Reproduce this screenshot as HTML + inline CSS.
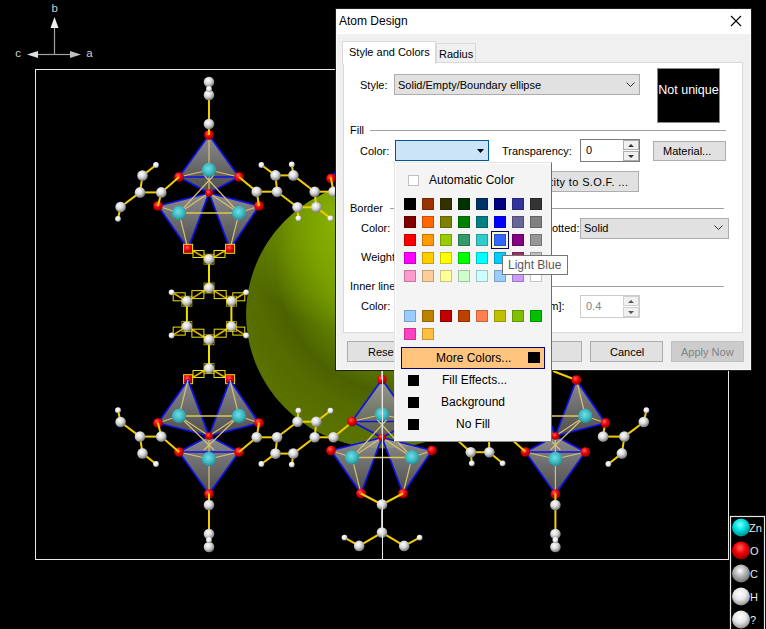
<!DOCTYPE html>
<html><head><meta charset="utf-8">
<style>
*{box-sizing:border-box;margin:0;padding:0}
html,body{width:766px;height:629px;overflow:hidden;background:#000}
body{position:relative;font-family:"Liberation Sans",sans-serif}
.a{position:absolute}
.t{position:absolute;white-space:nowrap;font-size:11px;color:#000;line-height:12px}
.btn{position:absolute;background:#e1e1e1;border:1px solid #adadad}
.sw{position:absolute;width:12px;height:12px;border:1px solid rgba(0,0,0,.22)}
</style></head><body>
<svg class="a" style="left:0;top:0" width="766" height="629" viewBox="0 0 766 629">
<defs>
<radialGradient id="gC" cx="0.4" cy="0.35" r="0.65"><stop offset="0" stop-color="#ffffff"/><stop offset="0.5" stop-color="#d8d8d8"/><stop offset="1" stop-color="#7a7a7a"/></radialGradient>
<radialGradient id="gH" cx="0.4" cy="0.35" r="0.65"><stop offset="0" stop-color="#ffffff"/><stop offset="0.6" stop-color="#e8e8e8"/><stop offset="1" stop-color="#909090"/></radialGradient>
<radialGradient id="gO" cx="0.4" cy="0.35" r="0.65"><stop offset="0" stop-color="#ff6060"/><stop offset="0.5" stop-color="#f00000"/><stop offset="1" stop-color="#900000"/></radialGradient>
<radialGradient id="gZn" cx="0.45" cy="0.4" r="0.6"><stop offset="0" stop-color="#70e0e8"/><stop offset="0.6" stop-color="#3cb8c0"/><stop offset="1" stop-color="#2a8890"/></radialGradient>
<radialGradient id="gEl1" gradientUnits="userSpaceOnUse" cx="405" cy="264" r="180"><stop offset="0" stop-color="#7a9e00"/><stop offset="0.44" stop-color="#6e9200"/><stop offset="0.56" stop-color="#5e7c00"/><stop offset="0.72" stop-color="#4c6200"/><stop offset="0.83" stop-color="#536b00"/><stop offset="1" stop-color="#5a7200"/></radialGradient>
<radialGradient id="gEl2" gradientUnits="userSpaceOnUse" cx="345" cy="218" r="110"><stop offset="0" stop-color="#8cb600" stop-opacity="0.95"/><stop offset="0.5" stop-color="#88b200" stop-opacity="0.55"/><stop offset="1" stop-color="#88b200" stop-opacity="0"/></radialGradient>
<radialGradient id="gLZn" cx="0.45" cy="0.35" r="0.65"><stop offset="0" stop-color="#80ffff"/><stop offset="0.5" stop-color="#00e0e0"/><stop offset="1" stop-color="#008888"/></radialGradient>
<radialGradient id="gLO" cx="0.45" cy="0.35" r="0.65"><stop offset="0" stop-color="#ff6060"/><stop offset="0.5" stop-color="#f00000"/><stop offset="1" stop-color="#900000"/></radialGradient>
<radialGradient id="gLC" cx="0.45" cy="0.35" r="0.65"><stop offset="0" stop-color="#ffffff"/><stop offset="0.4" stop-color="#c0c0c0"/><stop offset="1" stop-color="#707070"/></radialGradient>
<radialGradient id="gLH" cx="0.45" cy="0.35" r="0.65"><stop offset="0" stop-color="#ffffff"/><stop offset="0.5" stop-color="#e8e8e8"/><stop offset="1" stop-color="#909090"/></radialGradient>
<linearGradient id="gPoly" x1="0" y1="0" x2="0" y2="1"><stop offset="0" stop-color="#a4a4a4" stop-opacity="0.85"/><stop offset="1" stop-color="#5a5a5a" stop-opacity="0.85"/></linearGradient>
</defs>
<!-- axes -->
<g stroke="#a0a0a0" stroke-width="1.2" fill="none"><line x1="54.5" y1="54.5" x2="54.5" y2="27"/><line x1="38" y1="54.5" x2="70" y2="54.5"/></g>
<polygon points="54.5,17 50.5,28 58.5,28" fill="#f0f0f0"/>
<polygon points="27,54.5 38,51 38,58" fill="#e0e0e0"/>
<polygon points="81,54.5 70,51 70,58" fill="#c0c0c0"/>
<text x="51.5" y="12" font-family="Liberation Sans" font-size="11.5" fill="#d0d0d0">b</text>
<text x="15.2" y="57.2" font-family="Liberation Sans" font-size="11.5" fill="#d0d0d0">c</text>
<text x="86.3" y="57.2" font-family="Liberation Sans" font-size="11.5" fill="#d0d0d0">a</text>
<!-- frame -->
<rect x="35.5" y="69.5" width="693" height="490" fill="none" stroke="#e8e8e8" stroke-width="1"/>
<!-- ellipsoid -->
<polygon points="246.2,318.3 246.4,323.0 246.8,327.6 247.3,332.3 248.1,336.9 248.9,341.5 250.0,346.1 251.2,350.6 252.6,355.1 254.1,359.5 255.8,363.9 257.7,368.2 259.7,372.5 261.9,376.7 264.2,380.8 266.6,384.8 269.2,388.8 272.0,392.6 274.8,396.4 277.8,400.0 281.0,403.6 284.2,407.0 287.6,410.3 291.1,413.5 294.7,416.6 298.5,419.6 302.3,422.4 306.2,425.1 310.2,427.7 314.3,430.1 318.5,432.4 322.8,434.5 327.2,436.5 331.6,438.4 336.1,440.1 340.6,441.6 345.2,443.0 349.8,444.3 354.5,445.3 359.2,446.2 364.0,447.0 368.8,447.6 373.5,448.0 378.4,448.3 383.2,448.4 388.0,448.3 392.8,448.1 397.6,447.7 402.4,447.1 407.1,446.4 411.8,445.6 416.5,444.5 421.2,443.3 425.8,442.0 430.4,440.5 434.9,438.8 439.3,437.0 443.7,435.0 448.0,432.9 452.2,430.7 456.3,428.3 460.4,425.7 464.3,423.1 468.2,420.3 472.0,417.3 475.6,414.3 479.1,411.1 482.6,407.8 485.9,404.4 489.0,400.9 492.1,397.2 495.0,393.5 497.8,389.7 500.4,385.8 502.9,381.7 505.3,377.7 507.5,373.5 509.6,369.3 511.5,365.0 513.2,360.6 514.8,356.2 516.2,351.7 517.5,347.2 518.6,342.6 519.6,338.0 520.4,333.4 521.0,328.7 521.4,324.1 521.7,319.4 521.8,314.7 521.7,310.0 521.5,305.4 521.1,300.7 520.6,296.0 519.8,291.4 519.0,286.8 517.9,282.2 516.7,277.7 515.3,273.2 513.8,268.8 512.1,264.4 510.2,260.1 508.2,255.8 506.0,251.7 503.7,247.5 501.3,243.5 498.7,239.6 495.9,235.7 493.1,232.0 490.1,228.3 486.9,224.8 483.7,221.3 480.3,218.0 476.8,214.8 473.2,211.7 469.4,208.8 465.6,205.9 461.7,203.2 457.7,200.6 453.6,198.2 449.4,195.9 445.1,193.8 440.7,191.8 436.3,189.9 431.8,188.2 427.3,186.7 422.7,185.3 418.1,184.1 413.4,183.0 408.7,182.1 403.9,181.3 399.1,180.8 394.4,180.3 389.6,180.1 384.7,180.0 379.9,180.0 375.1,180.3 370.3,180.6 365.6,181.2 360.8,181.9 356.1,182.8 351.4,183.8 346.7,185.0 342.1,186.4 337.5,187.9 333.0,189.5 328.6,191.3 324.2,193.3 319.9,195.4 315.7,197.7 311.6,200.1 307.5,202.6 303.6,205.3 299.7,208.1 295.9,211.0 292.3,214.1 288.8,217.2 285.3,220.5 282.0,224.0 278.9,227.5 275.8,231.1 272.9,234.8 270.1,238.7 267.5,242.6 265.0,246.6 262.6,250.7 260.4,254.8 258.3,259.1 256.4,263.4 254.7,267.7 253.1,272.2 251.7,276.6 250.4,281.2 249.3,285.7 248.3,290.3 247.6,294.9 246.9,299.6 246.5,304.3 246.2,308.9 246.1,313.6" fill="url(#gEl1)"/><polygon points="246.2,318.3 246.4,323.0 246.8,327.6 247.3,332.3 248.1,336.9 248.9,341.5 250.0,346.1 251.2,350.6 252.6,355.1 254.1,359.5 255.8,363.9 257.7,368.2 259.7,372.5 261.9,376.7 264.2,380.8 266.6,384.8 269.2,388.8 272.0,392.6 274.8,396.4 277.8,400.0 281.0,403.6 284.2,407.0 287.6,410.3 291.1,413.5 294.7,416.6 298.5,419.6 302.3,422.4 306.2,425.1 310.2,427.7 314.3,430.1 318.5,432.4 322.8,434.5 327.2,436.5 331.6,438.4 336.1,440.1 340.6,441.6 345.2,443.0 349.8,444.3 354.5,445.3 359.2,446.2 364.0,447.0 368.8,447.6 373.5,448.0 378.4,448.3 383.2,448.4 388.0,448.3 392.8,448.1 397.6,447.7 402.4,447.1 407.1,446.4 411.8,445.6 416.5,444.5 421.2,443.3 425.8,442.0 430.4,440.5 434.9,438.8 439.3,437.0 443.7,435.0 448.0,432.9 452.2,430.7 456.3,428.3 460.4,425.7 464.3,423.1 468.2,420.3 472.0,417.3 475.6,414.3 479.1,411.1 482.6,407.8 485.9,404.4 489.0,400.9 492.1,397.2 495.0,393.5 497.8,389.7 500.4,385.8 502.9,381.7 505.3,377.7 507.5,373.5 509.6,369.3 511.5,365.0 513.2,360.6 514.8,356.2 516.2,351.7 517.5,347.2 518.6,342.6 519.6,338.0 520.4,333.4 521.0,328.7 521.4,324.1 521.7,319.4 521.8,314.7 521.7,310.0 521.5,305.4 521.1,300.7 520.6,296.0 519.8,291.4 519.0,286.8 517.9,282.2 516.7,277.7 515.3,273.2 513.8,268.8 512.1,264.4 510.2,260.1 508.2,255.8 506.0,251.7 503.7,247.5 501.3,243.5 498.7,239.6 495.9,235.7 493.1,232.0 490.1,228.3 486.9,224.8 483.7,221.3 480.3,218.0 476.8,214.8 473.2,211.7 469.4,208.8 465.6,205.9 461.7,203.2 457.7,200.6 453.6,198.2 449.4,195.9 445.1,193.8 440.7,191.8 436.3,189.9 431.8,188.2 427.3,186.7 422.7,185.3 418.1,184.1 413.4,183.0 408.7,182.1 403.9,181.3 399.1,180.8 394.4,180.3 389.6,180.1 384.7,180.0 379.9,180.0 375.1,180.3 370.3,180.6 365.6,181.2 360.8,181.9 356.1,182.8 351.4,183.8 346.7,185.0 342.1,186.4 337.5,187.9 333.0,189.5 328.6,191.3 324.2,193.3 319.9,195.4 315.7,197.7 311.6,200.1 307.5,202.6 303.6,205.3 299.7,208.1 295.9,211.0 292.3,214.1 288.8,217.2 285.3,220.5 282.0,224.0 278.9,227.5 275.8,231.1 272.9,234.8 270.1,238.7 267.5,242.6 265.0,246.6 262.6,250.7 260.4,254.8 258.3,259.1 256.4,263.4 254.7,267.7 253.1,272.2 251.7,276.6 250.4,281.2 249.3,285.7 248.3,290.3 247.6,294.9 246.9,299.6 246.5,304.3 246.2,308.9 246.1,313.6" fill="url(#gEl2)"/>
<g>
<polygon points="331.0,178.5 382.0,191.5 361.0,135.5" fill="url(#gPoly)" stroke="#1010e8" stroke-width="1.7" stroke-linejoin="round"/>
<polygon points="432.0,178.5 382.0,191.5 403.0,135.5" fill="url(#gPoly)" stroke="#1010e8" stroke-width="1.7" stroke-linejoin="round"/>
<polygon points="382.0,249.5 352.0,207.5 382.0,191.5 412.0,207.5" fill="url(#gPoly)" stroke="#1010e8" stroke-width="1.7" stroke-linejoin="round"/>
<line x1="352.0" y1="207.5" x2="412.0" y2="207.5" stroke="#1010e8" stroke-width="1.7"/>
<line x1="382.0" y1="214.5" x2="382.0" y2="249.5" stroke="#d8c070" stroke-width="1.2"/>
<line x1="382.0" y1="214.5" x2="352.0" y2="207.5" stroke="#d8c070" stroke-width="1.2"/>
<line x1="382.0" y1="214.5" x2="412.0" y2="207.5" stroke="#d8c070" stroke-width="1.2"/>
<line x1="382.0" y1="214.5" x2="382.0" y2="191.5" stroke="#d8c070" stroke-width="1.2"/>
<line x1="352.0" y1="171.5" x2="382.0" y2="191.5" stroke="#d8c070" stroke-width="1.2"/>
<line x1="352.0" y1="171.5" x2="331.0" y2="178.5" stroke="#d8c070" stroke-width="1.2"/>
<line x1="352.0" y1="171.5" x2="361.0" y2="135.5" stroke="#d8c070" stroke-width="1.2"/>
<line x1="352.0" y1="171.5" x2="387.0" y2="205.5" stroke="#d8c070" stroke-width="1.2"/>
<line x1="412.0" y1="171.5" x2="382.0" y2="191.5" stroke="#d8c070" stroke-width="1.2"/>
<line x1="412.0" y1="171.5" x2="432.0" y2="178.5" stroke="#d8c070" stroke-width="1.2"/>
<line x1="412.0" y1="171.5" x2="403.0" y2="135.5" stroke="#d8c070" stroke-width="1.2"/>
<line x1="412.0" y1="171.5" x2="377.0" y2="205.5" stroke="#d8c070" stroke-width="1.2"/>
<line x1="352.0" y1="171.5" x2="412.0" y2="171.5" stroke="#e0c850" stroke-width="1.5"/>
<circle cx="382.0" cy="214.5" r="7.2" fill="url(#gZn)"/>
<circle cx="352.0" cy="171.5" r="7.2" fill="url(#gZn)"/>
<circle cx="412.0" cy="171.5" r="7.2" fill="url(#gZn)"/>
<circle cx="382.0" cy="249.5" r="4.8" fill="url(#gO)"/>
<circle cx="352.0" cy="207.5" r="4.8" fill="url(#gO)"/>
<circle cx="412.0" cy="207.5" r="4.8" fill="url(#gO)"/>
<circle cx="331.0" cy="178.5" r="4.8" fill="url(#gO)"/>
<circle cx="432.0" cy="178.5" r="4.8" fill="url(#gO)"/>
<circle cx="382.0" cy="191.5" r="3.8" fill="url(#gO)"/>
<polygon points="158.0,206.0 209.0,193.0 188.0,249.0" fill="url(#gPoly)" stroke="#1010e8" stroke-width="1.7" stroke-linejoin="round"/>
<polygon points="259.0,206.0 209.0,193.0 230.0,249.0" fill="url(#gPoly)" stroke="#1010e8" stroke-width="1.7" stroke-linejoin="round"/>
<polygon points="209.0,135.0 179.0,177.0 209.0,193.0 239.0,177.0" fill="url(#gPoly)" stroke="#1010e8" stroke-width="1.7" stroke-linejoin="round"/>
<line x1="179.0" y1="177.0" x2="239.0" y2="177.0" stroke="#1010e8" stroke-width="1.7"/>
<line x1="209.0" y1="170.0" x2="209.0" y2="135.0" stroke="#d8c070" stroke-width="1.2"/>
<line x1="209.0" y1="170.0" x2="179.0" y2="177.0" stroke="#d8c070" stroke-width="1.2"/>
<line x1="209.0" y1="170.0" x2="239.0" y2="177.0" stroke="#d8c070" stroke-width="1.2"/>
<line x1="209.0" y1="170.0" x2="209.0" y2="193.0" stroke="#d8c070" stroke-width="1.2"/>
<line x1="179.0" y1="213.0" x2="209.0" y2="193.0" stroke="#d8c070" stroke-width="1.2"/>
<line x1="179.0" y1="213.0" x2="158.0" y2="206.0" stroke="#d8c070" stroke-width="1.2"/>
<line x1="179.0" y1="213.0" x2="188.0" y2="249.0" stroke="#d8c070" stroke-width="1.2"/>
<line x1="179.0" y1="213.0" x2="214.0" y2="175.0" stroke="#d8c070" stroke-width="1.2"/>
<line x1="239.0" y1="213.0" x2="209.0" y2="193.0" stroke="#d8c070" stroke-width="1.2"/>
<line x1="239.0" y1="213.0" x2="259.0" y2="206.0" stroke="#d8c070" stroke-width="1.2"/>
<line x1="239.0" y1="213.0" x2="230.0" y2="249.0" stroke="#d8c070" stroke-width="1.2"/>
<line x1="239.0" y1="213.0" x2="204.0" y2="175.0" stroke="#d8c070" stroke-width="1.2"/>
<line x1="179.0" y1="213.0" x2="239.0" y2="213.0" stroke="#e0c850" stroke-width="1.5"/>
<circle cx="209.0" cy="170.0" r="7.2" fill="url(#gZn)"/>
<circle cx="179.0" cy="213.0" r="7.2" fill="url(#gZn)"/>
<circle cx="239.0" cy="213.0" r="7.2" fill="url(#gZn)"/>
<circle cx="209.0" cy="135.0" r="4.8" fill="url(#gO)"/>
<circle cx="179.0" cy="177.0" r="4.8" fill="url(#gO)"/>
<circle cx="239.0" cy="177.0" r="4.8" fill="url(#gO)"/>
<circle cx="158.0" cy="206.0" r="4.8" fill="url(#gO)"/>
<circle cx="259.0" cy="206.0" r="4.8" fill="url(#gO)"/>
<circle cx="209.0" cy="193.0" r="3.8" fill="url(#gO)"/>
<line x1="158.0" y1="206.0" x2="161.3" y2="192.4" stroke="#f0cc00" stroke-width="2"/>
<line x1="259.0" y1="206.0" x2="256.7" y2="191.7" stroke="#f0cc00" stroke-width="2"/>
<line x1="179.0" y1="177.0" x2="161.3" y2="192.4" stroke="#f0cc00" stroke-width="2"/>
<line x1="239.0" y1="177.0" x2="256.7" y2="191.7" stroke="#f0cc00" stroke-width="2"/>
<line x1="333.5" y1="191.7" x2="330.8" y2="177.5" stroke="#f0cc00" stroke-width="2"/>
<line x1="209.0" y1="135.0" x2="209.0" y2="82.0" stroke="#f0cc00" stroke-width="2"/>
<line x1="156.0" y1="165.0" x2="142.5" y2="175.6" stroke="#f0cc00" stroke-width="2"/>
<line x1="142.5" y1="175.6" x2="140.0" y2="192.4" stroke="#f0cc00" stroke-width="2"/>
<line x1="140.0" y1="192.4" x2="161.3" y2="192.4" stroke="#f0cc00" stroke-width="2"/>
<line x1="140.0" y1="192.4" x2="120.6" y2="207.0" stroke="#f0cc00" stroke-width="2"/>
<line x1="120.6" y1="207.0" x2="118.0" y2="218.8" stroke="#f0cc00" stroke-width="2"/>
<circle cx="156.0" cy="165.0" r="2.9" fill="url(#gH)"/>
<circle cx="142.5" cy="175.6" r="5.3" fill="url(#gC)"/>
<circle cx="140.0" cy="192.4" r="5.3" fill="url(#gC)"/>
<circle cx="161.3" cy="192.4" r="5.3" fill="url(#gC)"/>
<circle cx="120.6" cy="207.0" r="5.3" fill="url(#gC)"/>
<circle cx="118.0" cy="218.8" r="2.9" fill="url(#gH)"/>
<line x1="256.7" y1="191.7" x2="277.1" y2="191.7" stroke="#f0cc00" stroke-width="2"/>
<line x1="277.1" y1="191.7" x2="275.5" y2="175.4" stroke="#f0cc00" stroke-width="2"/>
<line x1="275.5" y1="175.4" x2="293.4" y2="175.4" stroke="#f0cc00" stroke-width="2"/>
<line x1="293.4" y1="175.4" x2="314.7" y2="191.7" stroke="#f0cc00" stroke-width="2"/>
<line x1="314.7" y1="191.7" x2="316.3" y2="207.3" stroke="#f0cc00" stroke-width="2"/>
<line x1="297.5" y1="207.3" x2="277.1" y2="191.7" stroke="#f0cc00" stroke-width="2"/>
<line x1="314.7" y1="191.7" x2="333.5" y2="191.7" stroke="#f0cc00" stroke-width="2"/>
<line x1="275.5" y1="175.4" x2="261.4" y2="165.0" stroke="#f0cc00" stroke-width="2"/>
<line x1="293.4" y1="175.4" x2="291.8" y2="164.4" stroke="#f0cc00" stroke-width="2"/>
<line x1="297.5" y1="207.3" x2="298.4" y2="218.3" stroke="#f0cc00" stroke-width="2"/>
<line x1="316.3" y1="207.3" x2="330.4" y2="218.3" stroke="#f0cc00" stroke-width="2"/>
<line x1="297.5" y1="207.3" x2="316.3" y2="207.3" stroke="#f0cc00" stroke-width="2"/>
<circle cx="256.7" cy="191.7" r="5.3" fill="url(#gC)"/>
<circle cx="275.5" cy="175.4" r="5.3" fill="url(#gC)"/>
<circle cx="277.1" cy="191.7" r="5.3" fill="url(#gC)"/>
<circle cx="293.4" cy="175.4" r="5.3" fill="url(#gC)"/>
<circle cx="297.5" cy="207.3" r="5.3" fill="url(#gC)"/>
<circle cx="314.7" cy="191.7" r="5.3" fill="url(#gC)"/>
<circle cx="316.3" cy="207.3" r="5.3" fill="url(#gC)"/>
<circle cx="333.5" cy="191.7" r="5.3" fill="url(#gC)"/>
<circle cx="261.4" cy="165.0" r="2.9" fill="url(#gH)"/>
<circle cx="291.8" cy="164.4" r="2.9" fill="url(#gH)"/>
<circle cx="298.4" cy="218.3" r="2.9" fill="url(#gH)"/>
<circle cx="330.4" cy="218.3" r="2.9" fill="url(#gH)"/>
<circle cx="209.0" cy="124.0" r="5.3" fill="url(#gC)"/>
<circle cx="209.0" cy="95.0" r="5.3" fill="url(#gC)"/>
<circle cx="209.0" cy="82.0" r="5.3" fill="url(#gC)"/>
<circle cx="209.0" cy="89.0" r="2.9" fill="url(#gH)"/>
<line x1="209.0" y1="259.2" x2="209.0" y2="288.0" stroke="#f0e000" stroke-width="2"/>
<line x1="186.9" y1="301.2" x2="186.9" y2="326.6" stroke="#f0e000" stroke-width="2"/>
<line x1="231.4" y1="301.2" x2="231.4" y2="326.6" stroke="#f0e000" stroke-width="2"/>
<line x1="209.0" y1="339.8" x2="209.0" y2="368.6" stroke="#f0e000" stroke-width="2"/>
<line x1="205.9" y1="289.6" x2="189.9" y2="299.6" stroke="#e0b000" stroke-width="1.6"/>
<rect x="191.9" y="290.6" width="12" height="8" fill="none" stroke="#f0e000" stroke-width="1"/>
<line x1="212.2" y1="289.6" x2="228.2" y2="299.6" stroke="#e0b000" stroke-width="1.6"/>
<rect x="214.2" y="290.6" width="12" height="8" fill="none" stroke="#f0e000" stroke-width="1"/>
<line x1="189.9" y1="328.2" x2="205.9" y2="338.2" stroke="#e0b000" stroke-width="1.6"/>
<rect x="191.9" y="329.2" width="12" height="8" fill="none" stroke="#f0e000" stroke-width="1"/>
<line x1="228.2" y1="328.2" x2="212.2" y2="338.2" stroke="#e0b000" stroke-width="1.6"/>
<rect x="214.2" y="329.2" width="12" height="8" fill="none" stroke="#f0e000" stroke-width="1"/>
<line x1="187.2" y1="301.8" x2="171.2" y2="291.8" stroke="#e0b000" stroke-width="1.6"/>
<rect x="173.2" y="292.8" width="12" height="8" fill="none" stroke="#f0e000" stroke-width="1"/>
<line x1="230.8" y1="301.8" x2="246.8" y2="291.8" stroke="#e0b000" stroke-width="1.6"/>
<rect x="232.8" y="292.8" width="12" height="8" fill="none" stroke="#f0e000" stroke-width="1"/>
<line x1="187.2" y1="326.1" x2="171.2" y2="336.1" stroke="#e0b000" stroke-width="1.6"/>
<rect x="173.2" y="327.1" width="12" height="8" fill="none" stroke="#f0e000" stroke-width="1"/>
<line x1="230.8" y1="326.1" x2="246.8" y2="336.1" stroke="#e0b000" stroke-width="1.6"/>
<rect x="232.8" y="327.1" width="12" height="8" fill="none" stroke="#f0e000" stroke-width="1"/>
<line x1="191.0" y1="249.5" x2="206.0" y2="258.5" stroke="#e0b000" stroke-width="1.6"/>
<rect x="193.0" y="250.5" width="11" height="7" fill="none" stroke="#f0e000" stroke-width="1"/>
<line x1="227.0" y1="249.5" x2="212.0" y2="258.5" stroke="#e0b000" stroke-width="1.6"/>
<rect x="214.0" y="250.5" width="11" height="7" fill="none" stroke="#f0e000" stroke-width="1"/>
<line x1="191.0" y1="378.5" x2="206.0" y2="369.5" stroke="#e0b000" stroke-width="1.6"/>
<rect x="193.0" y="370.5" width="11" height="7" fill="none" stroke="#f0e000" stroke-width="1"/>
<line x1="227.0" y1="378.5" x2="212.0" y2="369.5" stroke="#e0b000" stroke-width="1.6"/>
<rect x="214.0" y="370.5" width="11" height="7" fill="none" stroke="#f0e000" stroke-width="1"/>
<circle cx="209.0" cy="259.2" r="5.3" fill="url(#gC)"/>
<circle cx="209.0" cy="288.0" r="5.3" fill="url(#gC)"/>
<circle cx="186.9" cy="301.2" r="5.3" fill="url(#gC)"/>
<circle cx="231.4" cy="301.2" r="5.3" fill="url(#gC)"/>
<circle cx="186.9" cy="326.6" r="5.3" fill="url(#gC)"/>
<circle cx="231.4" cy="326.6" r="5.3" fill="url(#gC)"/>
<circle cx="209.0" cy="339.8" r="5.3" fill="url(#gC)"/>
<circle cx="209.0" cy="368.6" r="5.3" fill="url(#gC)"/>
<circle cx="171.6" cy="292.3" r="2.9" fill="url(#gH)"/>
<circle cx="246.1" cy="292.3" r="2.9" fill="url(#gH)"/>
<circle cx="171.6" cy="335.5" r="2.9" fill="url(#gH)"/>
<circle cx="246.1" cy="335.5" r="2.9" fill="url(#gH)"/>
<rect x="204.0" y="254.2" width="10" height="10" fill="none" stroke="#f0e000" stroke-width="0.8" stroke-opacity="0.8"/>
<rect x="204.0" y="283.0" width="10" height="10" fill="none" stroke="#f0e000" stroke-width="0.8" stroke-opacity="0.8"/>
<rect x="181.9" y="296.2" width="10" height="10" fill="none" stroke="#f0e000" stroke-width="0.8" stroke-opacity="0.8"/>
<rect x="226.4" y="296.2" width="10" height="10" fill="none" stroke="#f0e000" stroke-width="0.8" stroke-opacity="0.8"/>
<rect x="181.9" y="321.6" width="10" height="10" fill="none" stroke="#f0e000" stroke-width="0.8" stroke-opacity="0.8"/>
<rect x="226.4" y="321.6" width="10" height="10" fill="none" stroke="#f0e000" stroke-width="0.8" stroke-opacity="0.8"/>
<rect x="204.0" y="334.8" width="10" height="10" fill="none" stroke="#f0e000" stroke-width="0.8" stroke-opacity="0.8"/>
<rect x="204.0" y="363.6" width="10" height="10" fill="none" stroke="#f0e000" stroke-width="0.8" stroke-opacity="0.8"/>
<rect x="183.6" y="244.3" width="9" height="9" fill="url(#gO)" stroke="#f0e000" stroke-width="1"/>
<rect x="225.6" y="244.3" width="9" height="9" fill="url(#gO)" stroke="#f0e000" stroke-width="1"/>
<rect x="183.6" y="374.7" width="9" height="9" fill="url(#gO)" stroke="#f0e000" stroke-width="1"/>
<rect x="225.6" y="374.7" width="9" height="9" fill="url(#gO)" stroke="#f0e000" stroke-width="1"/>
<polygon points="158.0,423.0 209.0,436.0 188.0,380.0" fill="url(#gPoly)" stroke="#1010e8" stroke-width="1.7" stroke-linejoin="round"/>
<polygon points="259.0,423.0 209.0,436.0 230.0,380.0" fill="url(#gPoly)" stroke="#1010e8" stroke-width="1.7" stroke-linejoin="round"/>
<polygon points="209.0,494.0 179.0,452.0 209.0,436.0 239.0,452.0" fill="url(#gPoly)" stroke="#1010e8" stroke-width="1.7" stroke-linejoin="round"/>
<line x1="179.0" y1="452.0" x2="239.0" y2="452.0" stroke="#1010e8" stroke-width="1.7"/>
<line x1="209.0" y1="459.0" x2="209.0" y2="494.0" stroke="#d8c070" stroke-width="1.2"/>
<line x1="209.0" y1="459.0" x2="179.0" y2="452.0" stroke="#d8c070" stroke-width="1.2"/>
<line x1="209.0" y1="459.0" x2="239.0" y2="452.0" stroke="#d8c070" stroke-width="1.2"/>
<line x1="209.0" y1="459.0" x2="209.0" y2="436.0" stroke="#d8c070" stroke-width="1.2"/>
<line x1="179.0" y1="416.0" x2="209.0" y2="436.0" stroke="#d8c070" stroke-width="1.2"/>
<line x1="179.0" y1="416.0" x2="158.0" y2="423.0" stroke="#d8c070" stroke-width="1.2"/>
<line x1="179.0" y1="416.0" x2="188.0" y2="380.0" stroke="#d8c070" stroke-width="1.2"/>
<line x1="179.0" y1="416.0" x2="214.0" y2="450.0" stroke="#d8c070" stroke-width="1.2"/>
<line x1="239.0" y1="416.0" x2="209.0" y2="436.0" stroke="#d8c070" stroke-width="1.2"/>
<line x1="239.0" y1="416.0" x2="259.0" y2="423.0" stroke="#d8c070" stroke-width="1.2"/>
<line x1="239.0" y1="416.0" x2="230.0" y2="380.0" stroke="#d8c070" stroke-width="1.2"/>
<line x1="239.0" y1="416.0" x2="204.0" y2="450.0" stroke="#d8c070" stroke-width="1.2"/>
<line x1="179.0" y1="416.0" x2="239.0" y2="416.0" stroke="#e0c850" stroke-width="1.5"/>
<circle cx="209.0" cy="459.0" r="7.2" fill="url(#gZn)"/>
<circle cx="179.0" cy="416.0" r="7.2" fill="url(#gZn)"/>
<circle cx="239.0" cy="416.0" r="7.2" fill="url(#gZn)"/>
<circle cx="209.0" cy="494.0" r="4.8" fill="url(#gO)"/>
<circle cx="179.0" cy="452.0" r="4.8" fill="url(#gO)"/>
<circle cx="239.0" cy="452.0" r="4.8" fill="url(#gO)"/>
<circle cx="158.0" cy="423.0" r="4.8" fill="url(#gO)"/>
<circle cx="259.0" cy="423.0" r="4.8" fill="url(#gO)"/>
<circle cx="209.0" cy="436.0" r="3.8" fill="url(#gO)"/>
<line x1="158.0" y1="423.0" x2="161.3" y2="436.6" stroke="#f0cc00" stroke-width="2"/>
<line x1="259.0" y1="423.0" x2="256.7" y2="437.3" stroke="#f0cc00" stroke-width="2"/>
<line x1="179.0" y1="452.0" x2="161.3" y2="436.6" stroke="#f0cc00" stroke-width="2"/>
<line x1="239.0" y1="452.0" x2="256.7" y2="437.3" stroke="#f0cc00" stroke-width="2"/>
<line x1="333.5" y1="437.3" x2="352.5" y2="421.7" stroke="#f0cc00" stroke-width="2"/>
<line x1="156.0" y1="464.0" x2="142.5" y2="453.4" stroke="#f0cc00" stroke-width="2"/>
<line x1="142.5" y1="453.4" x2="140.0" y2="436.6" stroke="#f0cc00" stroke-width="2"/>
<line x1="140.0" y1="436.6" x2="161.3" y2="436.6" stroke="#f0cc00" stroke-width="2"/>
<line x1="140.0" y1="436.6" x2="120.6" y2="422.0" stroke="#f0cc00" stroke-width="2"/>
<line x1="120.6" y1="422.0" x2="118.0" y2="410.2" stroke="#f0cc00" stroke-width="2"/>
<circle cx="156.0" cy="464.0" r="2.9" fill="url(#gH)"/>
<circle cx="142.5" cy="453.4" r="5.3" fill="url(#gC)"/>
<circle cx="140.0" cy="436.6" r="5.3" fill="url(#gC)"/>
<circle cx="161.3" cy="436.6" r="5.3" fill="url(#gC)"/>
<circle cx="120.6" cy="422.0" r="5.3" fill="url(#gC)"/>
<circle cx="118.0" cy="410.2" r="2.9" fill="url(#gH)"/>
<line x1="256.7" y1="437.3" x2="277.1" y2="437.3" stroke="#f0cc00" stroke-width="2"/>
<line x1="277.1" y1="437.3" x2="275.5" y2="453.6" stroke="#f0cc00" stroke-width="2"/>
<line x1="275.5" y1="453.6" x2="293.4" y2="453.6" stroke="#f0cc00" stroke-width="2"/>
<line x1="293.4" y1="453.6" x2="314.7" y2="437.3" stroke="#f0cc00" stroke-width="2"/>
<line x1="314.7" y1="437.3" x2="316.3" y2="421.7" stroke="#f0cc00" stroke-width="2"/>
<line x1="297.5" y1="421.7" x2="277.1" y2="437.3" stroke="#f0cc00" stroke-width="2"/>
<line x1="314.7" y1="437.3" x2="333.5" y2="437.3" stroke="#f0cc00" stroke-width="2"/>
<line x1="275.5" y1="453.6" x2="261.4" y2="464.0" stroke="#f0cc00" stroke-width="2"/>
<line x1="293.4" y1="453.6" x2="291.8" y2="464.6" stroke="#f0cc00" stroke-width="2"/>
<line x1="297.5" y1="421.7" x2="298.4" y2="410.7" stroke="#f0cc00" stroke-width="2"/>
<line x1="316.3" y1="421.7" x2="330.4" y2="410.7" stroke="#f0cc00" stroke-width="2"/>
<line x1="297.5" y1="421.7" x2="316.3" y2="421.7" stroke="#f0cc00" stroke-width="2"/>
<circle cx="256.7" cy="437.3" r="5.3" fill="url(#gC)"/>
<circle cx="275.5" cy="453.6" r="5.3" fill="url(#gC)"/>
<circle cx="277.1" cy="437.3" r="5.3" fill="url(#gC)"/>
<circle cx="293.4" cy="453.6" r="5.3" fill="url(#gC)"/>
<circle cx="297.5" cy="421.7" r="5.3" fill="url(#gC)"/>
<circle cx="314.7" cy="437.3" r="5.3" fill="url(#gC)"/>
<circle cx="316.3" cy="421.7" r="5.3" fill="url(#gC)"/>
<circle cx="333.5" cy="437.3" r="5.3" fill="url(#gC)"/>
<circle cx="261.4" cy="464.0" r="2.9" fill="url(#gH)"/>
<circle cx="291.8" cy="464.6" r="2.9" fill="url(#gH)"/>
<circle cx="298.4" cy="410.7" r="2.9" fill="url(#gH)"/>
<circle cx="330.4" cy="410.7" r="2.9" fill="url(#gH)"/>
<line x1="209.0" y1="493.5" x2="209.0" y2="505.0" stroke="#f0cc00" stroke-width="2"/>
<line x1="209.0" y1="505.0" x2="209.0" y2="534.0" stroke="#f0cc00" stroke-width="2"/>
<line x1="209.0" y1="534.0" x2="209.0" y2="547.0" stroke="#f0cc00" stroke-width="2"/>
<circle cx="209.0" cy="505.0" r="5.3" fill="url(#gC)"/>
<circle cx="209.0" cy="534.0" r="5.3" fill="url(#gC)"/>
<circle cx="209.0" cy="547.0" r="5.3" fill="url(#gC)"/>
<circle cx="209.0" cy="540.0" r="2.9" fill="url(#gH)"/>
<polygon points="331.0,450.5 382.0,437.5 361.0,493.5" fill="url(#gPoly)" stroke="#1010e8" stroke-width="1.7" stroke-linejoin="round"/>
<polygon points="432.0,450.5 382.0,437.5 403.0,493.5" fill="url(#gPoly)" stroke="#1010e8" stroke-width="1.7" stroke-linejoin="round"/>
<polygon points="382.0,379.5 352.0,421.5 382.0,437.5 412.0,421.5" fill="url(#gPoly)" stroke="#1010e8" stroke-width="1.7" stroke-linejoin="round"/>
<line x1="352.0" y1="421.5" x2="412.0" y2="421.5" stroke="#1010e8" stroke-width="1.7"/>
<line x1="382.0" y1="414.5" x2="382.0" y2="379.5" stroke="#d8c070" stroke-width="1.2"/>
<line x1="382.0" y1="414.5" x2="352.0" y2="421.5" stroke="#d8c070" stroke-width="1.2"/>
<line x1="382.0" y1="414.5" x2="412.0" y2="421.5" stroke="#d8c070" stroke-width="1.2"/>
<line x1="382.0" y1="414.5" x2="382.0" y2="437.5" stroke="#d8c070" stroke-width="1.2"/>
<line x1="352.0" y1="457.5" x2="382.0" y2="437.5" stroke="#d8c070" stroke-width="1.2"/>
<line x1="352.0" y1="457.5" x2="331.0" y2="450.5" stroke="#d8c070" stroke-width="1.2"/>
<line x1="352.0" y1="457.5" x2="361.0" y2="493.5" stroke="#d8c070" stroke-width="1.2"/>
<line x1="352.0" y1="457.5" x2="387.0" y2="419.5" stroke="#d8c070" stroke-width="1.2"/>
<line x1="412.0" y1="457.5" x2="382.0" y2="437.5" stroke="#d8c070" stroke-width="1.2"/>
<line x1="412.0" y1="457.5" x2="432.0" y2="450.5" stroke="#d8c070" stroke-width="1.2"/>
<line x1="412.0" y1="457.5" x2="403.0" y2="493.5" stroke="#d8c070" stroke-width="1.2"/>
<line x1="412.0" y1="457.5" x2="377.0" y2="419.5" stroke="#d8c070" stroke-width="1.2"/>
<line x1="352.0" y1="457.5" x2="412.0" y2="457.5" stroke="#e0c850" stroke-width="1.5"/>
<circle cx="382.0" cy="414.5" r="7.2" fill="url(#gZn)"/>
<circle cx="352.0" cy="457.5" r="7.2" fill="url(#gZn)"/>
<circle cx="412.0" cy="457.5" r="7.2" fill="url(#gZn)"/>
<circle cx="382.0" cy="379.5" r="4.8" fill="url(#gO)"/>
<circle cx="352.0" cy="421.5" r="4.8" fill="url(#gO)"/>
<circle cx="412.0" cy="421.5" r="4.8" fill="url(#gO)"/>
<circle cx="331.0" cy="450.5" r="4.8" fill="url(#gO)"/>
<circle cx="432.0" cy="450.5" r="4.8" fill="url(#gO)"/>
<circle cx="382.0" cy="437.5" r="3.8" fill="url(#gO)"/>
<circle cx="361.0" cy="493.5" r="4.8" fill="url(#gO)"/>
<circle cx="403.0" cy="493.5" r="4.8" fill="url(#gO)"/>
<line x1="382.0" y1="370.0" x2="382.0" y2="379.0" stroke="#f0cc00" stroke-width="2"/>
<line x1="360.8" y1="493.5" x2="382.0" y2="504.5" stroke="#f0cc00" stroke-width="2"/>
<line x1="402.9" y1="493.5" x2="382.0" y2="504.5" stroke="#f0cc00" stroke-width="2"/>
<line x1="382.0" y1="504.5" x2="382.0" y2="532.6" stroke="#f0cc00" stroke-width="2"/>
<line x1="382.0" y1="532.6" x2="359.2" y2="545.9" stroke="#f0cc00" stroke-width="2"/>
<line x1="382.0" y1="532.6" x2="404.2" y2="545.9" stroke="#f0cc00" stroke-width="2"/>
<line x1="359.2" y1="545.9" x2="344.5" y2="537.6" stroke="#f0cc00" stroke-width="2"/>
<line x1="404.2" y1="545.9" x2="419.6" y2="537.6" stroke="#f0cc00" stroke-width="2"/>
<circle cx="382.0" cy="504.5" r="5.3" fill="url(#gC)"/>
<circle cx="382.0" cy="532.6" r="5.3" fill="url(#gC)"/>
<circle cx="359.2" cy="545.9" r="5.3" fill="url(#gC)"/>
<circle cx="404.2" cy="545.9" r="5.3" fill="url(#gC)"/>
<circle cx="344.5" cy="537.6" r="2.9" fill="url(#gH)"/>
<circle cx="419.6" cy="537.6" r="2.9" fill="url(#gH)"/>
<line x1="576.0" y1="380.0" x2="553.0" y2="371.0" stroke="#f0cc00" stroke-width="2"/>
<line x1="605.6" y1="421.0" x2="603.0" y2="436.3" stroke="#f0cc00" stroke-width="2"/>
<polygon points="504.4,423.0 555.4,436.0 534.4,380.0" fill="url(#gPoly)" stroke="#1010e8" stroke-width="1.7" stroke-linejoin="round"/>
<polygon points="605.4,423.0 555.4,436.0 576.4,380.0" fill="url(#gPoly)" stroke="#1010e8" stroke-width="1.7" stroke-linejoin="round"/>
<polygon points="555.4,494.0 525.4,452.0 555.4,436.0 585.4,452.0" fill="url(#gPoly)" stroke="#1010e8" stroke-width="1.7" stroke-linejoin="round"/>
<line x1="525.4" y1="452.0" x2="585.4" y2="452.0" stroke="#1010e8" stroke-width="1.7"/>
<line x1="555.4" y1="459.0" x2="555.4" y2="494.0" stroke="#d8c070" stroke-width="1.2"/>
<line x1="555.4" y1="459.0" x2="525.4" y2="452.0" stroke="#d8c070" stroke-width="1.2"/>
<line x1="555.4" y1="459.0" x2="585.4" y2="452.0" stroke="#d8c070" stroke-width="1.2"/>
<line x1="555.4" y1="459.0" x2="555.4" y2="436.0" stroke="#d8c070" stroke-width="1.2"/>
<line x1="525.4" y1="416.0" x2="555.4" y2="436.0" stroke="#d8c070" stroke-width="1.2"/>
<line x1="525.4" y1="416.0" x2="504.4" y2="423.0" stroke="#d8c070" stroke-width="1.2"/>
<line x1="525.4" y1="416.0" x2="534.4" y2="380.0" stroke="#d8c070" stroke-width="1.2"/>
<line x1="525.4" y1="416.0" x2="560.4" y2="450.0" stroke="#d8c070" stroke-width="1.2"/>
<line x1="585.4" y1="416.0" x2="555.4" y2="436.0" stroke="#d8c070" stroke-width="1.2"/>
<line x1="585.4" y1="416.0" x2="605.4" y2="423.0" stroke="#d8c070" stroke-width="1.2"/>
<line x1="585.4" y1="416.0" x2="576.4" y2="380.0" stroke="#d8c070" stroke-width="1.2"/>
<line x1="585.4" y1="416.0" x2="550.4" y2="450.0" stroke="#d8c070" stroke-width="1.2"/>
<line x1="525.4" y1="416.0" x2="585.4" y2="416.0" stroke="#e0c850" stroke-width="1.5"/>
<circle cx="555.4" cy="459.0" r="7.2" fill="url(#gZn)"/>
<circle cx="525.4" cy="416.0" r="7.2" fill="url(#gZn)"/>
<circle cx="585.4" cy="416.0" r="7.2" fill="url(#gZn)"/>
<circle cx="555.4" cy="494.0" r="4.8" fill="url(#gO)"/>
<circle cx="525.4" cy="452.0" r="4.8" fill="url(#gO)"/>
<circle cx="585.4" cy="452.0" r="4.8" fill="url(#gO)"/>
<circle cx="504.4" cy="423.0" r="4.8" fill="url(#gO)"/>
<circle cx="605.4" cy="423.0" r="4.8" fill="url(#gO)"/>
<circle cx="555.4" cy="436.0" r="3.8" fill="url(#gO)"/>
<circle cx="534.4" cy="380.0" r="4.8" fill="url(#gO)"/>
<circle cx="576.4" cy="380.0" r="4.8" fill="url(#gO)"/>
<line x1="555.4" y1="493.5" x2="555.4" y2="505.0" stroke="#f0cc00" stroke-width="2"/>
<line x1="555.4" y1="505.0" x2="555.4" y2="534.0" stroke="#f0cc00" stroke-width="2"/>
<line x1="555.4" y1="534.0" x2="555.4" y2="547.0" stroke="#f0cc00" stroke-width="2"/>
<circle cx="555.4" cy="505.0" r="5.3" fill="url(#gC)"/>
<circle cx="555.4" cy="534.0" r="5.3" fill="url(#gC)"/>
<circle cx="555.4" cy="547.0" r="5.3" fill="url(#gC)"/>
<circle cx="555.4" cy="540.0" r="2.9" fill="url(#gH)"/>
<line x1="608.4" y1="464.0" x2="621.9" y2="453.4" stroke="#f0cc00" stroke-width="2"/>
<line x1="621.9" y1="453.4" x2="624.4" y2="436.6" stroke="#f0cc00" stroke-width="2"/>
<line x1="624.4" y1="436.6" x2="603.1" y2="436.6" stroke="#f0cc00" stroke-width="2"/>
<line x1="624.4" y1="436.6" x2="643.8" y2="422.0" stroke="#f0cc00" stroke-width="2"/>
<line x1="643.8" y1="422.0" x2="646.4" y2="410.2" stroke="#f0cc00" stroke-width="2"/>
<circle cx="608.4" cy="464.0" r="2.9" fill="url(#gH)"/>
<circle cx="621.9" cy="453.4" r="5.3" fill="url(#gC)"/>
<circle cx="624.4" cy="436.6" r="5.3" fill="url(#gC)"/>
<circle cx="603.1" cy="436.6" r="5.3" fill="url(#gC)"/>
<circle cx="643.8" cy="422.0" r="5.3" fill="url(#gC)"/>
<circle cx="646.4" cy="410.2" r="2.9" fill="url(#gH)"/>
<line x1="470.8" y1="452.2" x2="455.0" y2="438.0" stroke="#f0cc00" stroke-width="2"/>
<line x1="489.3" y1="452.2" x2="489.0" y2="438.0" stroke="#f0cc00" stroke-width="2"/>
<line x1="525.2" y1="451.5" x2="510.0" y2="438.0" stroke="#f0cc00" stroke-width="2"/>
<line x1="470.8" y1="452.2" x2="489.3" y2="452.2" stroke="#f0cc00" stroke-width="2"/>
<line x1="470.8" y1="452.2" x2="471.8" y2="463.3" stroke="#f0cc00" stroke-width="2"/>
<line x1="489.3" y1="452.2" x2="502.6" y2="463.3" stroke="#f0cc00" stroke-width="2"/>
<circle cx="470.8" cy="452.2" r="5.3" fill="url(#gC)"/>
<circle cx="489.3" cy="452.2" r="5.3" fill="url(#gC)"/>
<circle cx="471.8" cy="463.3" r="2.9" fill="url(#gH)"/>
<circle cx="502.6" cy="463.3" r="2.9" fill="url(#gH)"/>
</g>
<line x1="382.5" y1="69" x2="382.5" y2="559" stroke="#e8e8e8" stroke-width="1"/>
<!-- legend -->
<rect x="730.5" y="516.5" width="34" height="120" fill="none" stroke="#e8e8e8" stroke-width="1.2"/>
<circle cx="741" cy="527.5" r="9" fill="url(#gLZn)"/>
<circle cx="741" cy="550.5" r="9" fill="url(#gLO)"/>
<circle cx="741" cy="573.5" r="9" fill="url(#gLC)"/>
<circle cx="741" cy="596.5" r="9" fill="url(#gLH)"/>
<circle cx="741" cy="619.5" r="9" fill="url(#gLH)"/>
<g font-family="Liberation Sans" font-size="11" fill="#e8e8e8">
<text x="749" y="532">Zn</text><text x="750" y="555">O</text><text x="750" y="578">C</text><text x="750" y="601">H</text><text x="750" y="624">?</text>
</g>
</svg>

<!-- dialog -->
<div class="a" style="left:336px;top:9px;width:415px;height:361px;background:#f0f0f0;border:1px solid #fafafa;box-shadow:0 0 0 1px #1e1e1e">
</div>
<div class="a" style="left:337px;top:10px;width:413px;height:24px;background:#fff"></div>
<div class="t" style="left:339px;top:15px;font-size:12px">Atom Design</div>
<svg class="a" style="left:730px;top:15px" width="12" height="12"><path d="M1 1L11 11M11 1L1 11" stroke="#000" stroke-width="1.1"/></svg>
<!-- tabs -->
<div class="a" style="left:436px;top:43px;width:40px;height:20px;background:#f0f0f0;border:1px solid #d9d9d9;border-bottom:none"></div>
<div class="t" style="left:439px;top:48px">Radius</div>
<div class="a" style="left:343px;top:62px;width:400px;height:271px;background:#fff;border:1px solid #d9d9d9"></div>
<div class="a" style="left:342px;top:41px;width:94px;height:23px;background:#fff;border:1px solid #d9d9d9;border-bottom:none"></div>
<div class="t" style="left:349px;top:46px">Style and Colors</div>
<!-- style row -->
<div class="t" style="left:360px;top:79px">Style:</div>
<div class="btn" style="left:394px;top:74px;width:246px;height:21px"></div>
<div class="t" style="left:398px;top:79px">Solid/Empty/Boundary ellipse</div>
<svg class="a" style="left:626px;top:82px" width="10" height="6"><path d="M0.5 0.5L4.5 4.5L8.5 0.5" stroke="#333" fill="none"/></svg>
<div class="a" style="left:657px;top:68px;width:63px;height:55px;background:#000;border:1px solid #888"></div>
<div class="t" style="left:656px;top:84px;width:65px;text-align:center;color:#fff;font-size:12.5px;line-height:13px">Not unique</div>
<!-- fill -->
<div class="t" style="left:350px;top:124px">Fill</div>
<div class="a" style="left:370px;top:130px;width:356px;height:1px;background:#a0a0a0"></div>
<div class="t" style="left:360px;top:145px">Color:</div>
<div class="a" style="left:395px;top:140px;width:94px;height:21px;background:#cce4f7;border:1px solid #005499"></div>
<svg class="a" style="left:477px;top:149px" width="7" height="4"><path d="M0 0H7L3.5 4Z" fill="#000"/></svg>
<div class="t" style="left:502px;top:145px">Transparency:</div>
<div class="a" style="left:580px;top:139px;width:60px;height:23px;background:#fff;border:1px solid #7a7a7a"></div>
<div class="t" style="left:586px;top:144px">0</div>
<div class="a" style="left:623px;top:140px;width:16px;height:10px;background:#f0f0f0;border:1px solid #adadad"></div>
<div class="a" style="left:623px;top:151px;width:16px;height:10px;background:#f0f0f0;border:1px solid #adadad"></div>
<svg class="a" style="left:627px;top:142px" width="8" height="18"><path d="M1 5H7L4 2Z M1 13H7L4 16Z" fill="#333"/></svg>
<div class="btn" style="left:653px;top:141px;width:73px;height:20px"></div>
<div class="t" style="left:663px;top:145px">Material...</div>
<div class="btn" style="left:500px;top:171px;width:139px;height:21px"></div>
<div class="t" style="left:550px;top:176px;letter-spacing:0.35px">tity to S.O.F. ...</div>
<!-- border -->
<div class="t" style="left:350px;top:202px">Border</div>
<div class="a" style="left:390px;top:208px;width:334px;height:1px;background:#a0a0a0"></div>
<div class="t" style="left:361px;top:222px">Color:</div>
<div class="t" style="left:544px;top:222px">Dotted:</div>
<div class="btn" style="left:580px;top:218px;width:149px;height:21px"></div>
<div class="t" style="left:584px;top:222px">Solid</div>
<svg class="a" style="left:714px;top:225px" width="10" height="6"><path d="M0.5 0.5L4.5 4.5L8.5 0.5" stroke="#333" fill="none"/></svg>
<div class="t" style="left:361px;top:251px">Weight:</div>
<!-- inner line -->
<div class="t" style="left:350px;top:280px">Inner line</div>
<div class="a" style="left:404px;top:286px;width:320px;height:1px;background:#a0a0a0"></div>
<div class="t" style="left:361px;top:300px">Color:</div>
<div class="t" style="left:537px;top:300px">[mm]:</div>
<div class="a" style="left:580px;top:295px;width:60px;height:23px;background:#fff;border:1px solid #cccccc"></div>
<div class="t" style="left:586px;top:300px;color:#838383">0.4</div>
<div class="a" style="left:623px;top:296px;width:16px;height:10px;background:#f0f0f0;border:1px solid #d0d0d0"></div>
<div class="a" style="left:623px;top:307px;width:16px;height:10px;background:#f0f0f0;border:1px solid #d0d0d0"></div>
<svg class="a" style="left:627px;top:298px" width="8" height="18"><path d="M1 5H7L4 2Z M1 13H7L4 16Z" fill="#555"/></svg>
<!-- bottom buttons -->
<div class="btn" style="left:347px;top:341px;width:73px;height:21px"></div>
<div class="t" style="left:368px;top:346px">Reset</div>
<div class="btn" style="left:507px;top:341px;width:75px;height:21px"></div>
<div class="btn" style="left:590px;top:341px;width:73px;height:21px"></div>
<div class="t" style="left:610px;top:346px">Cancel</div>
<div class="a" style="left:671px;top:341px;width:73px;height:21px;background:#cccccc;border:1px solid #bfbfbf"></div>
<div class="t" style="left:681px;top:346px;color:#838383">Apply Now</div>

<!-- popup -->
<div class="a" style="left:394px;top:162px;width:158px;height:280px;background:#f4f4f4;border:1px solid #e3e3e3;border-right-color:#6e6e6e;border-bottom-color:#8a8a8a;box-shadow:inset 1px 1px 0 #fff"></div>
<div class="a" style="left:408px;top:175px;width:11px;height:11px;background:#fff;border:1px solid #c0c0c0"></div>
<div class="t" style="left:429px;top:173px;font-size:12px;line-height:14px">Automatic Color</div>
<div class="sw" style="left:404px;top:198px;background:#000000"></div>
<div class="sw" style="left:422px;top:198px;background:#993300"></div>
<div class="sw" style="left:440px;top:198px;background:#333300"></div>
<div class="sw" style="left:458px;top:198px;background:#003300"></div>
<div class="sw" style="left:476px;top:198px;background:#003366"></div>
<div class="sw" style="left:494px;top:198px;background:#000080"></div>
<div class="sw" style="left:512px;top:198px;background:#333399"></div>
<div class="sw" style="left:530px;top:198px;background:#333333"></div>
<div class="sw" style="left:404px;top:216px;background:#800000"></div>
<div class="sw" style="left:422px;top:216px;background:#FF6600"></div>
<div class="sw" style="left:440px;top:216px;background:#808000"></div>
<div class="sw" style="left:458px;top:216px;background:#008000"></div>
<div class="sw" style="left:476px;top:216px;background:#008080"></div>
<div class="sw" style="left:494px;top:216px;background:#0000FF"></div>
<div class="sw" style="left:512px;top:216px;background:#666699"></div>
<div class="sw" style="left:530px;top:216px;background:#808080"></div>
<div class="sw" style="left:404px;top:234px;background:#FF0000"></div>
<div class="sw" style="left:422px;top:234px;background:#FF9900"></div>
<div class="sw" style="left:440px;top:234px;background:#99CC00"></div>
<div class="sw" style="left:458px;top:234px;background:#339966"></div>
<div class="sw" style="left:476px;top:234px;background:#33CCCC"></div>
<div class="sw" style="left:494px;top:234px;background:#3366FF"></div>
<div class="sw" style="left:512px;top:234px;background:#800080"></div>
<div class="sw" style="left:530px;top:234px;background:#969696"></div>
<div class="sw" style="left:404px;top:252px;background:#FF00FF"></div>
<div class="sw" style="left:422px;top:252px;background:#FFCC00"></div>
<div class="sw" style="left:440px;top:252px;background:#FFFF00"></div>
<div class="sw" style="left:458px;top:252px;background:#00FF00"></div>
<div class="sw" style="left:476px;top:252px;background:#00FFFF"></div>
<div class="sw" style="left:494px;top:252px;background:#00CCFF"></div>
<div class="sw" style="left:512px;top:252px;background:#993366"></div>
<div class="sw" style="left:530px;top:252px;background:#C0C0C0"></div>
<div class="sw" style="left:404px;top:270px;background:#FF99CC"></div>
<div class="sw" style="left:422px;top:270px;background:#FFCC99"></div>
<div class="sw" style="left:440px;top:270px;background:#FFFF99"></div>
<div class="sw" style="left:458px;top:270px;background:#CCFFCC"></div>
<div class="sw" style="left:476px;top:270px;background:#CCFFFF"></div>
<div class="sw" style="left:494px;top:270px;background:#99CCFF"></div>
<div class="sw" style="left:512px;top:270px;background:#CC99FF"></div>
<div class="sw" style="left:530px;top:270px;background:#FFFFFF"></div>
<div class="a" style="left:491px;top:231px;width:18px;height:18px;border:1px solid #000080;background:#fff8c0"></div>
<div class="sw" style="left:494px;top:234px;background:#3366FF"></div>
<div class="sw" style="left:404px;top:310px;background:#99CCFF"></div>
<div class="sw" style="left:422px;top:310px;background:#C08000"></div>
<div class="sw" style="left:440px;top:310px;background:#C00000"></div>
<div class="sw" style="left:458px;top:310px;background:#C04000"></div>
<div class="sw" style="left:476px;top:310px;background:#FF7F50"></div>
<div class="sw" style="left:494px;top:310px;background:#C0C000"></div>
<div class="sw" style="left:512px;top:310px;background:#80C000"></div>
<div class="sw" style="left:530px;top:310px;background:#00C000"></div>
<div class="sw" style="left:404px;top:328px;background:#FF40C0"></div>
<div class="sw" style="left:422px;top:328px;background:#FFC040"></div>
<div class="a" style="left:401px;top:347px;width:144px;height:22px;background:#ffc57f;border:1px solid #000080"></div>
<div class="t" style="left:436px;top:351px;font-size:12px;line-height:14px">More Colors...</div>
<div class="a" style="left:528px;top:352px;width:12px;height:11px;background:#000"></div>
<div class="a" style="left:408px;top:375px;width:11px;height:11px;background:#000"></div>
<div class="t" style="left:442px;top:373px;font-size:12px;line-height:14px">Fill Effects...</div>
<div class="a" style="left:408px;top:397px;width:11px;height:11px;background:#000"></div>
<div class="t" style="left:441px;top:395px;font-size:12px;line-height:14px">Background</div>
<div class="a" style="left:408px;top:419px;width:11px;height:11px;background:#000"></div>
<div class="t" style="left:456px;top:417px;font-size:12px;line-height:14px">No Fill</div>
<!-- tooltip -->
<div class="a" style="left:502px;top:255px;width:66px;height:20px;background:#fff;border:1px solid #767676"></div>
<div class="t" style="left:508px;top:259px;color:#575757;font-size:12px">Light Blue</div>
</body></html>
